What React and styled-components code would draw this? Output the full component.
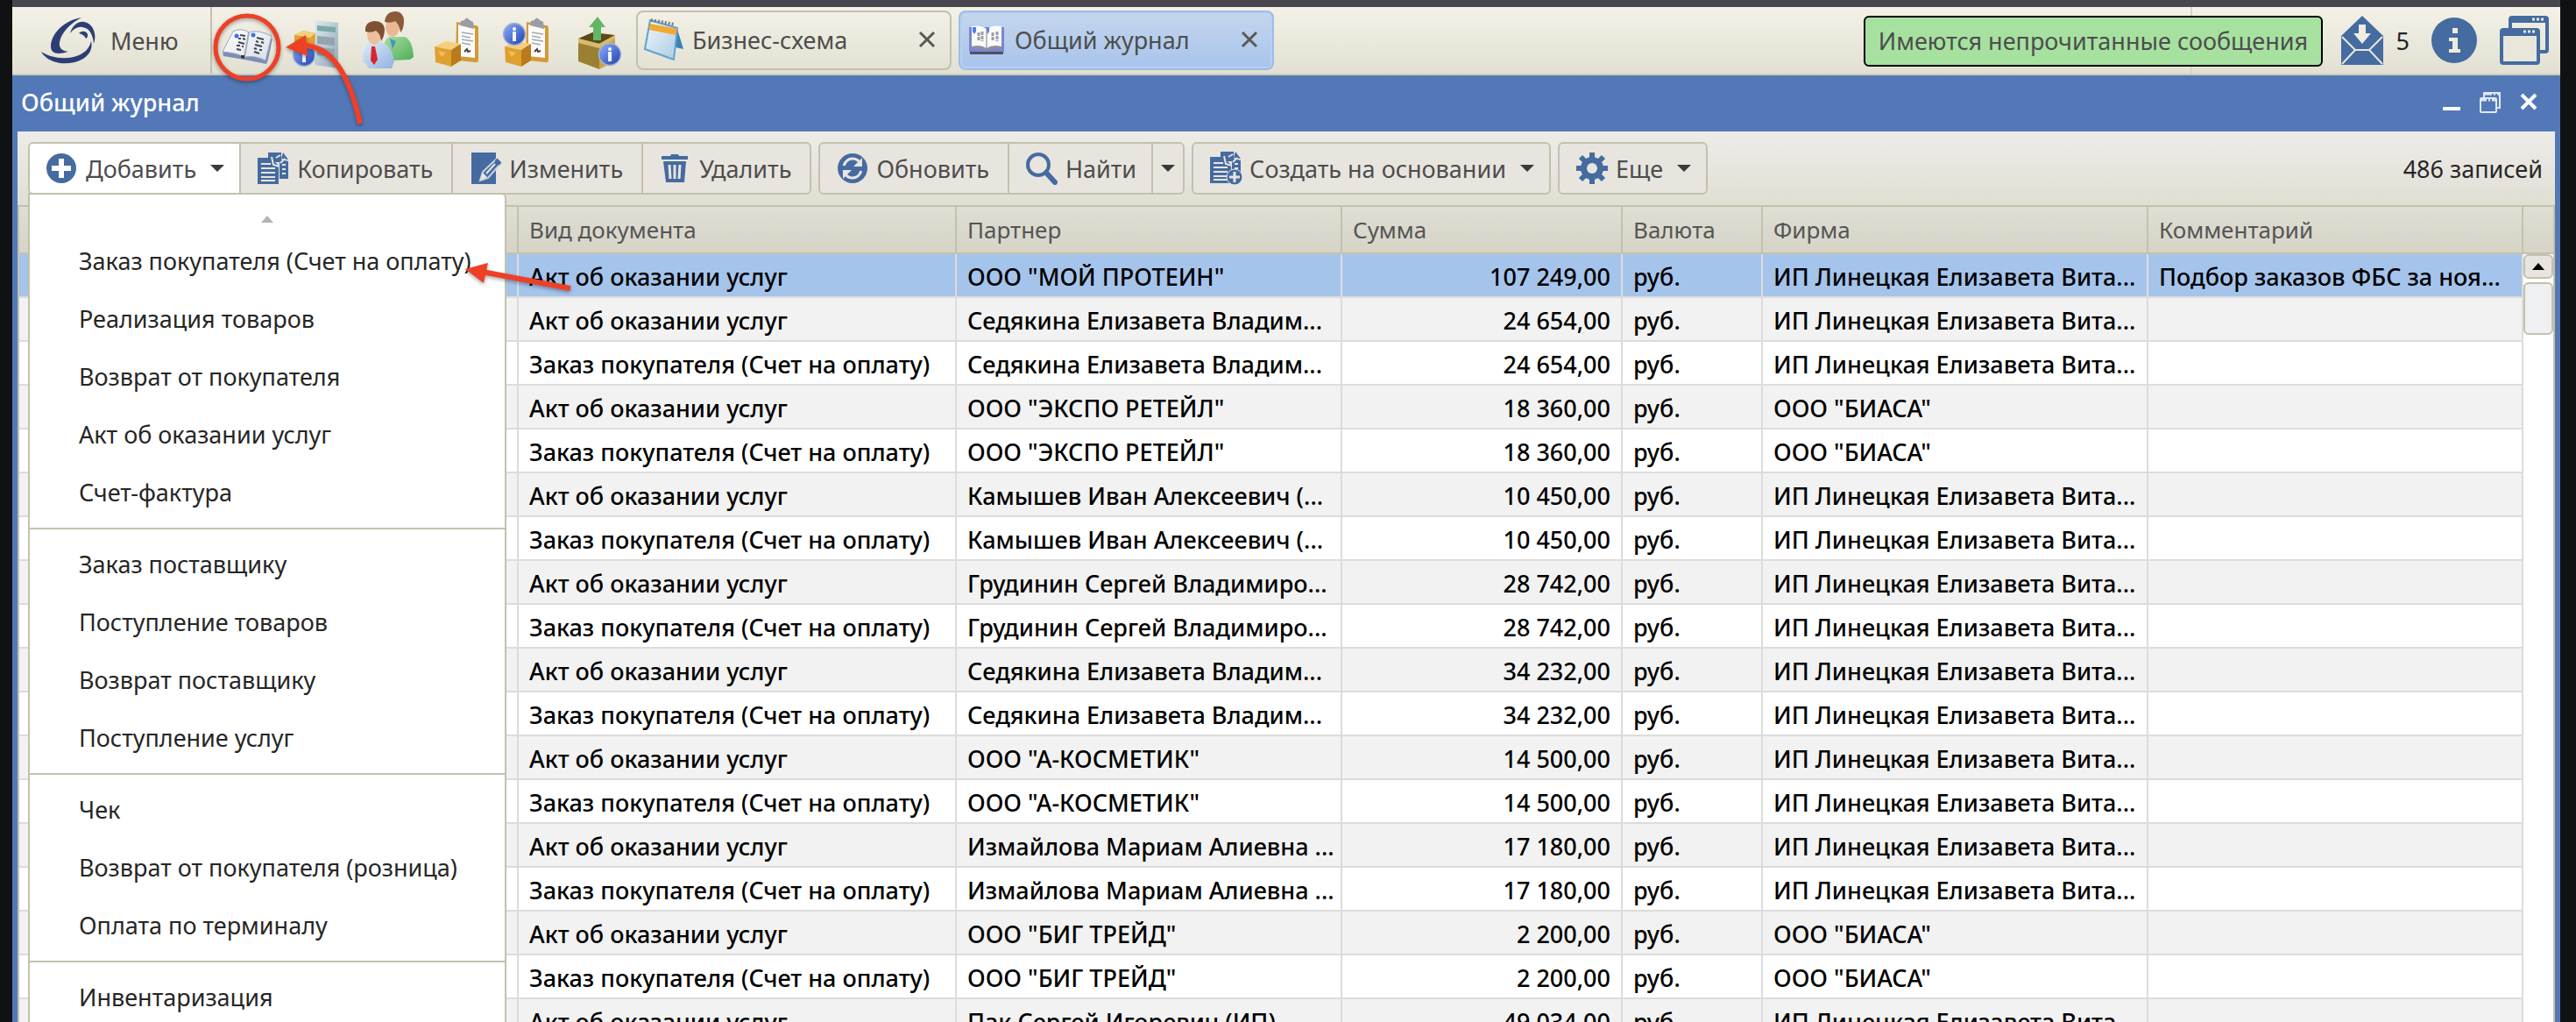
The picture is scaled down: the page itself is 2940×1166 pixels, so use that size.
import React from "react";
import styled, { createGlobalStyle, css } from "styled-components";

const LINE = "#c3c1ae";
const BLUE = "#5378b7";
const ICON = "#456ba0";
const TEXT = "#4d4d4d";

const GlobalStyle = createGlobalStyle`
  * { box-sizing: border-box; }
  body { margin: 0; background: #101112; }
  body, button, table { font-family: "Noto Sans", "Open Sans", sans-serif; font-size: 27px; }
  button { margin: 0; padding: 0; border: 0; background: none; color: inherit; cursor: pointer; }
  svg { display: block; flex: none; }
`;

const Desktop = styled.div`
  height: 100vh;
  overflow: hidden;
  position: relative;
  display: flex;
  padding: 0 18px 0 14px;
  background: #101112;
`;
const Window = styled.main`
  flex: 1;
  min-width: 0;
  display: flex;
  flex-direction: column;
  border-top: 8px solid #47464f;
`;

/* Top bar */
const TopBar = styled.header`
  display: flex;
  height: 78px;
  flex: none;
  border-bottom: 2px solid #cccbb9;
  background: linear-gradient(#f4f2e7, #e1e0d2);
  color: ${TEXT};
`;
const MenuButton = styled.button`
  width: 228px;
  display: flex;
  align-items: center;
  gap: 16px;
  padding-left: 32px;
  border-right: 2px solid ${LINE};
`;
const Shortcuts = styled.nav`
  display: flex;
  align-items: center;
  gap: 16px;
  padding: 0 12px 0 8px;
`;
const Tabs = styled.div`
  display: flex;
  align-items: center;
  gap: 8px;
  flex: 1;
`;
const Tab = styled.div`
  width: 360px;
  height: 68px;
  display: flex;
  align-items: center;
  padding: 0 16px 2px 6px;
  border: 2px solid ${LINE};
  border-radius: 8px;
  ${(p) =>
    p.$active &&
    css`
      border-color: #9dbce8;
      background: linear-gradient(#c5d6ed, #a7c4ec);
      box-shadow: inset 0 0 0 2px #b9d0f0;
    `}
`;
const TabLabel = styled.button`
  flex: 1;
  display: flex;
  align-items: center;
  gap: 8px;
  text-align: left;
  white-space: nowrap;
`;
const Status = styled.div`
  position: relative;
  width: 422px;
  display: flex;
  align-items: center;
  justify-content: flex-end;
  gap: 24px;
  padding-right: 12px;
  border-left: 2px solid #d6d4c6;
`;
const Notice = styled.div`
  position: absolute;
  top: 10px;
  right: 271px;
  width: 524px;
  height: 58px;
  display: flex;
  align-items: center;
  justify-content: center;
  padding-bottom: 2px;
  border: 2px solid #000;
  border-radius: 6px;
  background: #a6e1a0;
  white-space: nowrap;
`;
const MailButton = styled.button`
  display: flex;
  align-items: center;
  gap: 14px;
  color: #222;
`;

/* Journal window */
const TitleBar = styled.div`
  height: 64px;
  flex: none;
  display: flex;
  align-items: center;
  justify-content: space-between;
  padding: 0 26px 4px 10px;
  background: ${BLUE};
  color: #fff;
`;
const Title = styled.h1`
  margin: 0;
  font-size: 27px;
  font-weight: 500;
`;
const WindowButtons = styled.div`
  display: flex;
  align-items: center;
  gap: 20px;
`;
const Panel = styled.section`
  flex: 1;
  min-height: 0;
  display: flex;
  flex-direction: column;
  border: solid ${BLUE};
  border-width: 0 6px;
`;
const Toolbar = styled.div`
  display: flex;
  align-items: center;
  gap: 8px;
  flex: none;
  padding: 12px 14px 12px 12px;
  background: linear-gradient(#edece8, #e8e5df 50%, #e0dfd2);
`;
const Group = styled.div`
  position: relative;
  display: flex;
  height: 60px;
  border: 2px solid ${LINE};
  border-radius: 6px;
  background: #e8e5df;
`;
const ToolButton = styled.button`
  display: flex;
  align-items: center;
  gap: 8px;
  padding: ${(p) => (p.$narrow ? "0 9px" : p.$drop ? "0 17px 0 18px" : "0 21px 0 18px")};
  color: ${TEXT};
  white-space: nowrap;
  border-radius: ${(p) => (p.$open ? "4px 0 0 4px" : "0")};
  background: ${(p) => (p.$open ? "#fff" : "none")};
  & + & { border-left: 2px solid ${LINE}; }
`;
const Caret = styled.span`
  width: 0;
  height: 0;
  margin-left: ${(p) => (p.$alone ? 0 : 8)}px;
  border: solid transparent;
  border-width: 8px 8px 0;
  border-top-color: #3a3a3a;
`;
const Count = styled.output`
  margin-left: auto;
  color: #262626;
`;

/* Drop-down of the Add button */
const Menu = styled.div`
  position: absolute;
  z-index: 2;
  top: 56px;
  left: -2px;
  width: 546px;
  border: 2px solid ${LINE};
  border-radius: 0 6px 6px 0;
  background: #fff;
`;
const ScrollUp = styled.button`
  width: 100%;
  height: 36px;
  display: flex;
  align-items: flex-end;
  justify-content: center;
  padding-bottom: 4px;
  &::before {
    content: "";
    border: solid transparent;
    border-width: 0 7px 8px;
    border-bottom-color: #b3b3b3;
  }
`;
const MenuGroup = styled.ul`
  margin: 0;
  padding: 7px 0;
  list-style: none;
  & + & { border-top: 2px solid ${LINE}; }
`;
const MenuItem = styled.button`
  width: 100%;
  height: 66px;
  padding: 0 0 2px 56px;
  color: #262626;
  text-align: left;
  white-space: nowrap;
`;

/* Journal table */
const Grid = styled.div`
  flex: 1;
  min-height: 0;
  display: flex;
  overflow: hidden;
  border: 2px solid ${LINE};
  border-bottom: 0;
  background: #fff;
`;
const Table = styled.table`
  flex: 1;
  min-width: 0;
  width: 100%;
  align-self: flex-start;
  table-layout: fixed;
  border-collapse: separate;
  border-spacing: 0;
  color: #000;
`;
const Col = styled.col`
  width: ${(p) => (p.$width ? `${p.$width}px` : "auto")};
`;
const HeadCell = styled.th`
  height: 54px;
  padding: 0 12px;
  border: solid ${LINE};
  border-width: 0 2px 2px 0;
  background: linear-gradient(#dfded3, #d6d4c7);
  color: #555;
  font-size: 26px;
  font-weight: 400;
  text-align: left;
`;
const Row = styled.tr`
  background: ${(p) => (p.$selected ? "#a5c4ec" : "#fff")};
  &:nth-child(even) { background: #f2f2f2; }
`;
const Cell = styled.td`
  height: 50px;
  padding: 4px 12px 0;
  border: solid #dcdcdc;
  border-width: 0 2px 2px 0;
  overflow: hidden;
  line-height: 40px;
  white-space: nowrap;
  font-weight: 500;
  text-align: ${(p) => (p.$right ? "right" : "left")};
`;
const ScrollColumn = styled.div`
  width: 34px;
  flex: none;
  display: flex;
  flex-direction: column;
`;
const ScrollHead = styled.div`
  height: 54px;
  border-bottom: 2px solid ${LINE};
  background: linear-gradient(#dfded3, #d6d4c7);
`;
const ScrollButton = styled.button`
  height: 28px;
  display: flex;
  align-items: center;
  justify-content: center;
  border: 2px solid ${LINE};
  border-radius: 6px;
  background: #e8e5df;
  &::before {
    content: "";
    border: solid transparent;
    border-width: 0 7px 8px;
    border-bottom-color: #000;
  }
`;
const Thumb = styled.div`
  height: 60px;
  margin-top: 4px;
  border: 2px solid ${LINE};
  border-radius: 6px;
  background: #eff0f1;
`;
const Marks = styled.svg`
  position: absolute;
  top: 0;
  left: 0;
  z-index: 3;
  pointer-events: none;
  filter: drop-shadow(0 2px 2px rgba(0, 0, 0, 0.35));
`;

/* Icons */
const Logo = () => (
  <svg width="64" height="56" viewBox="0 0 64 56" fill="#2d3e74">
    <path d="M47 2C28 5 12 20 12 35c0 8 7 10 20 6-8-1-11-5-10-11C24 19 34 9 47 2z" />
    <path d="M1 41C9 55 32 58 47 50 57 45 60 36 58 29 56 37 51 42 44 45 29 51 12 48 1 41z" />
    <path d="M34 20C37 10 44 6 50 7c10 2 15 13 11 25-1-11-5-18-13-19-5-1-10 2-14 7z" />
    <path d="M44 20c4-4 9-2 10 1 0 2 0 4-2 5-1-3-4-5-8-6z" />
  </svg>
);
const Grad = ({ id, a, b }) => (
  <linearGradient id={id} x1="0" y1="0" x2="1" y2="1">
    <stop offset="0" stopColor={a} />
    <stop offset="1" stopColor={b} />
  </linearGradient>
);
const Ball = ({ x, y }) => (
  <g>
    <circle cx={x} cy={y} r="12.5" fill="url(#ball)" stroke="#a9b4cf" strokeWidth="1.5" />
    <circle cx={x} cy={y - 6} r="2" fill="#fff" />
    <path d={`M${x - 2} ${y - 3}h4v11h-4z`} fill="#eef3ff" />
  </g>
);
const Box = () => (
  <g>
    <path d="M6 39l13-6 17 3-11 7z" fill="#f6cf7c" />
    <path d="M6 39l19 4v19L7 57z" fill="#dfa02f" />
    <path d="M25 43l11-7v19l-11 7z" fill="#b97a1c" />
    <path d="M10 44l9 2-5 5z" fill="#f0bf5b" />
  </g>
);
const Clipboard = () => (
  <g>
    <path d="M31 11l22 4q3 0 3 3v36q0 4-4 3l-19-2q-3 0-3-3z" fill="#d39a3a" />
    <path d="M33 14l19 4v34l-19-2z" fill="#fbfbfb" />
    <path d="M36 10l4-1q2-5 6 0l4 2 1 8-16-4z" fill="#9a9da2" />
    <g stroke="#a3a8b0" strokeWidth="1.5" fill="none">
      <path d="M37 23l13 2M37 27l10 2M37 31l13 2M37 35l10 2" />
    </g>
    <path d="M40 45l3-3 1 3 3-1" stroke="#444" strokeWidth="2" fill="none" />
  </g>
);
const JournalIcon = () => (
  <svg width="64" height="64" viewBox="0 0 64 64">
    <defs><Grad id="page" a="#ffffff" b="#d8dee8" /></defs>
    <path d="M4 45l1 5 24 4 25 5 2-5 5-24-9 2z" fill="#7d8db8" />
    <path d="M16 22q9-5 18 1 9-4 26 4l-7 28q-12-6-23-4-12-5-26-6z" fill="url(#page)" stroke="#9aa5bd" strokeWidth="1" />
    <path d="M34 23l-5 28" stroke="#a6adba" strokeWidth="2" />
    <path d="M24 26l6 1M22 30l3 0M27 30l3 1M22 34l7 2M20 38l4 0M26 39l2 0M20 42l5 1" stroke="#44474d" strokeWidth="2" fill="none" />
    <path d="M43 29l8 2M42 33l3 1M48 34l3 1M41 37l8 2M40 41l3 1M46 43l3 0M40 45l6 2" stroke="#44474d" strokeWidth="2" fill="none" />
    <circle cx="20" cy="27" r="2.5" fill="#3f6ff0" /><circle cx="39" cy="26" r="2.5" fill="#3f6ff0" />
    <path d="M25 49l4 0 0 4-4-1z" fill="#333" />
  </svg>
);
const CalculatorIcon = () => (
  <svg width="64" height="64" viewBox="0 0 64 64">
    <defs><Grad id="ball" a="#8fb0ff" b="#1d3fae" /><Grad id="calc" a="#dfe9ee" b="#8fa9b8" /></defs>
    <path d="M6 26l10-5 14 3v22l-18 0-6-3z" fill="#dfa02f" />
    <path d="M6 26l10-5 14 3-6 5z" fill="#f6cf7c" />
    <Ball x={17} y={49} />
    <path d="M30 9l26 3v52l-27-4z" fill="url(#calc)" />
    <path d="M32 15l21 2v6l-21-2z" fill="#79aaa5" />
    <path d="M32 27l20 2v9l-20-2zM32 40l20 2v9l-20-2z" fill="#93a4ae" />
  </svg>
);
const PeopleIcon = () => (
  <svg width="64" height="68" viewBox="0 0 64 68">
    <defs><Grad id="green" a="#a8dfa0" b="#4fae58" /><Grad id="shirt" a="#dcebfa" b="#8fb2de" /></defs>
    <path d="M26 55q0-20 8-25h18q9 4 10 23l-4 3-20 1z" fill="url(#green)" />
    <path d="M35 32l3 12 4-9z" fill="#4a8fd0" />
    <ellipse cx="38" cy="19" rx="8" ry="11" fill="#e9b994" />
    <path d="M29 13q1-12 13-12 9 1 9 11 0 9-4 13-1-9-6-13-5 3-12 1z" fill="#8a5a3a" />
    <path d="M4 58q0-19 8-22h14q11 4 14 22l-3 8H11l-4-6z" fill="url(#shirt)" />
    <path d="M14 41h4l3 15-4 6-4-5z" fill="#d9262a" />
    <ellipse cx="17" cy="28" rx="8" ry="11" fill="#edc09d" />
    <path d="M7 24q-1-11 10-12 11 0 12 9 0 8-4 14-1-9-6-12-5 3-12 1z" fill="#7f5034" />
  </svg>
);
const BoxListIcon = () => (
  <svg width="64" height="64" viewBox="0 0 64 64"><Clipboard /><Box /></svg>
);
const BoxInfoIcon = () => (
  <svg width="64" height="64" viewBox="0 0 64 64"><Clipboard /><Box /><Ball x={17} y={25} /></svg>
);
const BoxOutIcon = () => (
  <svg width="64" height="68" viewBox="0 0 64 68">
    <path d="M10 32l16-7 26 3-18 10z" fill="#5d4a18" />
    <path d="M10 32l24 6v29L10 58z" fill="#9a8033" />
    <path d="M34 38l18-10v30l-18 9z" fill="#c9a64b" />
    <path d="M10 32l24 6 18-10v4L34 43 10 37z" fill="#d8bd68" />
    <path d="M32 7l9 12h-5v15h-9V19h-5z" fill="#62b765" />
    <Ball x={46} y={50} />
  </svg>
);
const CalendarIcon = () => (
  <svg width="48" height="52" viewBox="0 0 48 52">
    <defs><Grad id="sheet" a="#f1f7fb" b="#a9cbe4" /></defs>
    <path d="M38 11l8 26-9-2z" fill="#3f80b3" />
    <path d="M8 4l31 9-4 36L2 37z" fill="url(#sheet)" stroke="#5ea3d0" strokeWidth="2" />
    <path d="M8 8l31 6-2 7L7 15z" fill="#f3a832" />
    <path d="M9 4l27 5" stroke="#777e86" strokeWidth="4" strokeDasharray="2 2" />
  </svg>
);
const BookIcon = () => (
  <svg width="48" height="44" viewBox="0 0 48 44">
    <path d="M4 8h40v28H4z" fill="#7a86cf" />
    <path d="M5 36h38v3H5z" fill="#4b5163" />
    <path d="M7 7q10-2 17 3 7-5 17-3v25q-11-2-17 2-7-4-17-2z" fill="#fafafa" />
    <path d="M24 10v22" stroke="#b9bcc4" strokeWidth="2" />
    <path d="M15 14v10M19 13v11M31 14v10M36 13v11" stroke="#9a9da3" strokeWidth="3" strokeDasharray="4 1" />
    <path d="M8 8h4v5l-2 3-2-3zM24 8h3v5l-2 3z" fill="#4f7df0" />
    <path d="M7 30q10-3 17 2 7-5 17-2v3q-10-2-17 2-8-4-17-2z" fill="#8d929b" />
  </svg>
);
const CloseIcon = ({ color = "#5a5a54", w = 3 }) => (
  <svg width="20" height="20" viewBox="0 0 20 20" stroke={color} strokeWidth={w}>
    <path d="M2 2l16 16M18 2L2 18" />
  </svg>
);
const MailIcon = () => (
  <svg width="50" height="58" viewBox="0 0 50 58">
    <path d="M25 1l24 23v33H1V24z" fill={ICON} />
    <path d="M2 25l15 15h16l15-15M17 40L2 56M33 40l15 16" stroke="#e9e8dc" strokeWidth="2" fill="none" />
    <path d="M21 11h8v10h6L25 33 15 21h6z" fill="#eeecdf" />
  </svg>
);
const InfoIcon = () => (
  <svg width="54" height="54" viewBox="0 0 54 54">
    <circle cx="27" cy="27" r="26" fill={ICON} />
    <path d="M25 13h6v6h-6zM21 24h10v13h3v4H21v-4h4v-9h-4z" fill="#eeecdf" />
  </svg>
);
const WindowsIcon = () => (
  <svg width="58" height="58" viewBox="0 0 58 58">
    <path d="M13 16V5q0-2 2-2h38q2 0 2 2v35q0 2-2 2h-8" fill="none" stroke={ICON} strokeWidth="4" />
    <path d="M12 2h44v7H12z" fill={ICON} />
    <rect x="3" y="17" width="42" height="38" rx="2" fill="#e9e7dc" stroke={ICON} strokeWidth="4" />
    <path d="M2 16h44v8H2z" fill={ICON} />
    <path d="M38 5h3M43 5h3M48 5h3M28 19h3M33 19h3M38 19h3" stroke="#e9e7dc" strokeWidth="3" />
  </svg>
);
const MinimizeIcon = () => (
  <svg width="24" height="28" viewBox="0 0 24 28"><path d="M4 20h20v4H4z" fill="#fff" /></svg>
);
const RestoreIcon = () => (
  <svg width="28" height="28" viewBox="0 0 28 28" fill="none" stroke="#dfe8f7" strokeWidth="2">
    <path d="M7 9V4h18v17h-4" /><path d="M7 5h18" strokeWidth="3" strokeDasharray="9 2 2 2" />
    <rect x="3" y="10" width="18" height="16" rx="1" /><path d="M3 12h18" strokeWidth="3" strokeDasharray="7 2 2 2" />
  </svg>
);
const PlusIcon = () => (
  <svg width="38" height="38" viewBox="0 0 38 38">
    <circle cx="18" cy="19" r="17" fill={ICON} />
    <path d="M15 8h6v8h8v6h-8v8h-6v-8H7v-6h8z" fill="#fff" />
  </svg>
);
const Sheets = () => (
  <g>
    <path d="M13 1h15v8l8 2v20H26V12H13z" fill={ICON} />
    <path d="M30 1l6 8-8-1z" fill={ICON} />
    <path d="M1 7h15l9 9v21H1z" fill={ICON} />
    <path d="M17 6l2 9 7 2M27 13l5-5M29 15h4M29 20h4M29 25h4M22 7l5-3" stroke="#e8e5df" strokeWidth="2" fill="none" />
    <path d="M5 14h11M5 19h16M5 24h16M5 29h16M5 33h16" stroke="#e8e5df" strokeWidth="2" />
  </g>
);
const CopyIcon = () => (
  <svg width="38" height="38" viewBox="0 0 38 38"><Sheets /></svg>
);
const CreateIcon = () => (
  <svg width="38" height="40" viewBox="0 0 38 40">
    <Sheets />
    <circle cx="29" cy="30" r="9" fill={ICON} stroke="#e8e5df" strokeWidth="1" />
    <path d="M29 24v12M23 30h12" stroke="#e8e5df" strokeWidth="3" />
  </svg>
);
const EditIcon = () => (
  <svg width="38" height="38" viewBox="0 0 38 38">
    <path d="M3 1h28v36H3z" fill={ICON} />
    <path d="M13 33l3-10L31 9l5 5-14 16z" fill={ICON} stroke="#c9d3de" strokeWidth="2" />
    <path d="M13 33l3-9 5 5z" fill="#e8e5df" />
    <path d="M20 25l10-11" stroke="#e8e5df" strokeWidth="2" />
    <path d="M31 9l5 5" stroke={ICON} strokeWidth="4" />
  </svg>
);
const TrashIcon = () => (
  <svg width="38" height="38" viewBox="0 0 38 38">
    <path d="M3 5h10l1-2h8l1 2h10v4H3zM5 11h26l-2 24H8z" fill={ICON} />
    <path d="M12 15l1 16M18 15v16M24 15l-1 16" stroke="#e8e5df" strokeWidth="3" />
  </svg>
);
const RefreshIcon = () => (
  <svg width="38" height="38" viewBox="0 0 38 38">
    <circle cx="19" cy="19" r="17" fill={ICON} />
    <path d="M9 16q3-8 10-8 5 0 8 4M29 22q-3 8-10 8-5 0-8-4" stroke="#e8e5df" strokeWidth="3" fill="none" />
    <path d="M30 7v10H20l4-4zM8 31V21h10l-4 4z" fill="#e8e5df" />
  </svg>
);
const SearchIcon = () => (
  <svg width="38" height="38" viewBox="0 0 38 38" fill="none" stroke={ICON}>
    <circle cx="15" cy="15" r="12" strokeWidth="4" />
    <path d="M24 24l10 11" strokeWidth="6" strokeLinecap="round" />
  </svg>
);
const GearIcon = () => (
  <svg width="38" height="38" viewBox="0 0 38 38">
    <g stroke={ICON} strokeWidth="6">
      <path d="M19 1v36M1 19h36M6 6l26 26M32 6L6 32" />
    </g>
    <circle cx="19" cy="19" r="13" fill={ICON} />
    <circle cx="19" cy="19" r="6" fill="#e8e5df" />
  </svg>
);

/* Data */
const MENU = [
  ["Заказ покупателя (Счет на оплату)", "Реализация товаров", "Возврат от покупателя", "Акт об оказании услуг", "Счет-фактура"],
  ["Заказ поставщику", "Поступление товаров", "Возврат поставщику", "Поступление услуг"],
  ["Чек", "Возврат от покупателя (розница)", "Оплата по терминалу"],
  ["Инвентаризация"],
];
const SHORTCUTS = [
  ["Общий журнал", JournalIcon],
  ["Остатки", CalculatorIcon],
  ["Партнеры", PeopleIcon],
  ["Товары", BoxListIcon],
  ["Сведения о товарах", BoxInfoIcon],
  ["Отгрузка", BoxOutIcon],
];
const COLUMNS = [
  ["", 570],
  ["Вид документа", 500],
  ["Партнер", 440],
  ["Сумма", 320],
  ["Валюта", 160],
  ["Фирма", 440],
  ["Комментарий", null],
];
const ACT = "Акт об оказании услуг";
const ORDER = "Заказ покупателя (Счет на оплату)";
const IP = "ИП Линецкая Елизавета Вита...";
const BIASA = 'ООО "БИАСА"';
const ROWS = [
  [ACT, 'ООО "МОЙ ПРОТЕИН"', "107 249,00", IP, "Подбор заказов ФБС за ноя..."],
  [ACT, "Седякина Елизавета Владим...", "24 654,00", IP],
  [ORDER, "Седякина Елизавета Владим...", "24 654,00", IP],
  [ACT, 'ООО "ЭКСПО РЕТЕЙЛ"', "18 360,00", BIASA],
  [ORDER, 'ООО "ЭКСПО РЕТЕЙЛ"', "18 360,00", BIASA],
  [ACT, "Камышев Иван Алексеевич (...", "10 450,00", IP],
  [ORDER, "Камышев Иван Алексеевич (...", "10 450,00", IP],
  [ACT, "Грудинин Сергей Владимиро...", "28 742,00", IP],
  [ORDER, "Грудинин Сергей Владимиро...", "28 742,00", IP],
  [ACT, "Седякина Елизавета Владим...", "34 232,00", IP],
  [ORDER, "Седякина Елизавета Владим...", "34 232,00", IP],
  [ACT, 'ООО "А-КОСМЕТИК"', "14 500,00", IP],
  [ORDER, 'ООО "А-КОСМЕТИК"', "14 500,00", IP],
  [ACT, "Измайлова Мариам Алиевна ...", "17 180,00", IP],
  [ORDER, "Измайлова Мариам Алиевна ...", "17 180,00", IP],
  [ACT, 'ООО "БИГ ТРЕЙД"', "2 200,00", BIASA],
  [ORDER, 'ООО "БИГ ТРЕЙД"', "2 200,00", BIASA],
  [ACT, "Пак Сергей Игоревич (ИП)", "49 034,00", IP],
];

export default function App() {
  return (
    <Desktop>
      <GlobalStyle />
      <Window>
        <TopBar>
          <MenuButton><Logo />Меню</MenuButton>
          <Shortcuts>
            {SHORTCUTS.map(([name, Icon]) => (
              <button key={name} aria-label={name}><Icon /></button>
            ))}
          </Shortcuts>
          <Tabs>
            <Tab>
              <TabLabel><CalendarIcon />Бизнес-схема</TabLabel>
              <button aria-label="Закрыть"><CloseIcon /></button>
            </Tab>
            <Tab $active>
              <TabLabel><BookIcon />Общий журнал</TabLabel>
              <button aria-label="Закрыть"><CloseIcon /></button>
            </Tab>
          </Tabs>
          <Status>
            <Notice role="status">Имеются непрочитанные сообщения</Notice>
            <MailButton><MailIcon />5</MailButton>
            <button aria-label="Справка"><InfoIcon /></button>
            <button aria-label="Окна"><WindowsIcon /></button>
          </Status>
        </TopBar>
        <TitleBar>
          <Title>Общий журнал</Title>
          <WindowButtons>
            <button aria-label="Свернуть"><MinimizeIcon /></button>
            <button aria-label="Восстановить"><RestoreIcon /></button>
            <button aria-label="Закрыть"><CloseIcon color="#fff" w={4} /></button>
          </WindowButtons>
        </TitleBar>
        <Panel>
          <Toolbar>
            <Group>
              <ToolButton $open $drop aria-expanded="true"><PlusIcon />Добавить<Caret /></ToolButton>
              <ToolButton><CopyIcon />Копировать</ToolButton>
              <ToolButton><EditIcon />Изменить</ToolButton>
              <ToolButton><TrashIcon />Удалить</ToolButton>
              <Menu>
                <ScrollUp aria-label="Прокрутить вверх" />
                {MENU.map((items) => (
                  <MenuGroup key={items[0]}>
                    {items.map((item) => <li key={item}><MenuItem>{item}</MenuItem></li>)}
                  </MenuGroup>
                ))}
              </Menu>
            </Group>
            <Group>
              <ToolButton><RefreshIcon />Обновить</ToolButton>
              <ToolButton $drop><SearchIcon />Найти</ToolButton>
              <ToolButton $narrow aria-label="Варианты поиска"><Caret $alone /></ToolButton>
            </Group>
            <Group><ToolButton $drop><CreateIcon />Создать на основании<Caret /></ToolButton></Group>
            <Group><ToolButton $drop><GearIcon />Еще<Caret /></ToolButton></Group>
            <Count>486 записей</Count>
          </Toolbar>
          <Grid>
            <Table>
              <colgroup>{COLUMNS.map(([name, width]) => <Col key={name} $width={width} />)}</colgroup>
              <thead>
                <tr>{COLUMNS.map(([name]) => <HeadCell key={name} scope="col">{name}</HeadCell>)}</tr>
              </thead>
              <tbody>
                {ROWS.map(([kind, partner, sum, firm, comment], i) => (
                  <Row key={i} $selected={i === 0}>
                    <Cell />
                    <Cell>{kind}</Cell>
                    <Cell>{partner}</Cell>
                    <Cell $right>{sum}</Cell>
                    <Cell>руб.</Cell>
                    <Cell>{firm}</Cell>
                    <Cell>{comment}</Cell>
                  </Row>
                ))}
              </tbody>
            </Table>
            <ScrollColumn>
              <ScrollHead />
              <ScrollButton aria-label="Вверх" />
              <Thumb />
            </ScrollColumn>
          </Grid>
        </Panel>
      </Window>
      <Marks width="680" height="350" viewBox="0 0 680 350" fill="none" stroke="#ee4027" strokeWidth="6">
        <circle cx="282" cy="54" r="36" strokeWidth="5" />
        <path d="M346 52C380 52 400 90 411 141M550 310L651 329" />
        <path d="M326 54L349 40L351 64zM531 307L557 300L552 323z" fill="#ee4027" stroke="none" />
      </Marks>
    </Desktop>
  );
}
